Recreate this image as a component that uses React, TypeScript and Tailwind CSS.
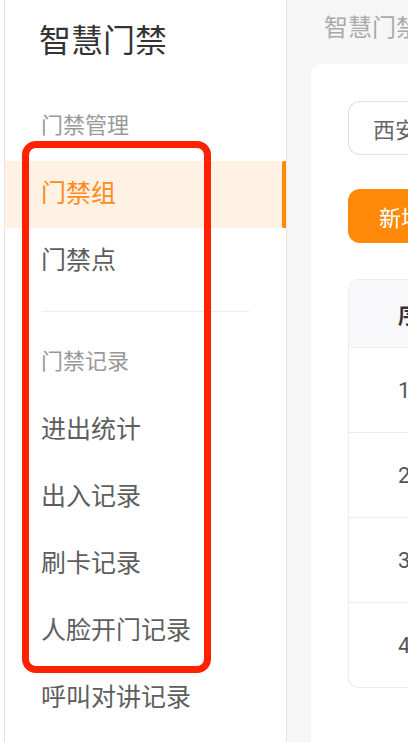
import React from 'react';

const groups = [
  {
    title: '门禁管理',
    items: ['门禁组', '门禁点'],
  },
  {
    title: '门禁记录',
    items: ['进出统计', '出入记录', '刷卡记录', '人脸开门记录', '呼叫对讲记录'],
  },
];

const rows = [1, 2, 3, 4];

const App: React.FC = () => {
  const active = '门禁组';

  return (
    <div className="relative flex h-[742px] w-[408px] overflow-hidden bg-white font-['Noto_Sans_CJK_SC','Noto_Sans',sans-serif]">
      {/* Sidebar */}
      <aside className="ml-[4px] flex w-[283px] shrink-0 flex-col border-x border-[#e6e6e6] bg-white">
        <h1 className="pl-[34px] pt-[22px] text-[32px] leading-[32px] text-[#333333]">智慧门禁</h1>

        {groups.map((group, gi) => (
          <div key={group.title}>
            {gi > 0 && <div className="mx-[37px] mt-[16px] h-px bg-[#eeeeee]"></div>}
            <div
              className={`pl-[36px] pb-[27px] text-[22px] leading-[22px] text-[#999999] ${
                gi === 0 ? 'pt-[58px]' : 'pt-[36px]'
              }`}
            >
              {group.title}
            </div>
            {group.items.map((item) => {
              const isActive = item === active;
              return (
                <div
                  key={item}
                  className={`relative flex h-[67px] items-center pb-[5px] pl-[36px] text-[25px] ${
                    isActive ? 'bg-[#fff2e5] text-[#ff8c1a]' : 'text-[#5e5e5e]'
                  }`}
                >
                  {item}
                  {isActive && (
                    <span className="absolute right-0 top-0 h-full w-[4px] rounded-l-[2px] bg-[#ff8a00]"></span>
                  )}
                </div>
              );
            })}
          </div>
        ))}
      </aside>

      {/* Main area */}
      <main className="flex min-w-0 flex-1 flex-col bg-[#f6f6f7]">
        <div className="whitespace-nowrap pl-[37px] pt-[14px] text-[24px] leading-[24px] text-[#aaaaaa]">
          智慧门禁 / 门禁组
        </div>
        <div className="ml-[24px] mt-[26px] flex-1 rounded-tl-[10px] bg-white pl-[37px] pt-[37px]">
          <div className="flex h-[54px] w-[300px] items-center whitespace-nowrap rounded-l-[12px] border border-r-0 border-[#dcdde6] pl-[24px] text-[22px] text-[#666666]">
            西安市高新区
          </div>
          <div className="mt-[34px] flex h-[54px] w-[300px] items-center whitespace-nowrap rounded-l-[12px] bg-[#ff8a0a] pl-[31px] text-[22px] text-white">
            新增门禁组
          </div>
          <div className="mt-[36px] w-[300px] overflow-hidden rounded-l-[10px] border border-r-0 border-[#ebebf5]">
            <div className="flex h-[67px] items-center whitespace-nowrap bg-[#f8f8fb] pl-[49px] text-[22px] font-bold text-[#333333]">
              序号
            </div>
            {rows.map((n) => (
              <div
                key={n}
                className="flex h-[85px] items-center border-t border-[#ebebf5] pl-[49px] text-[22px] text-[#555555] font-['Roboto',sans-serif]"
              >
                {n}
              </div>
            ))}
          </div>
        </div>
      </main>

      {/* Red annotation frame */}
      <div className="pointer-events-none absolute left-[22px] top-[141px] h-[532px] w-[189px] rounded-[14px] border-[7px] border-[#ff2200]"></div>
    </div>
  );
};

export default App;
